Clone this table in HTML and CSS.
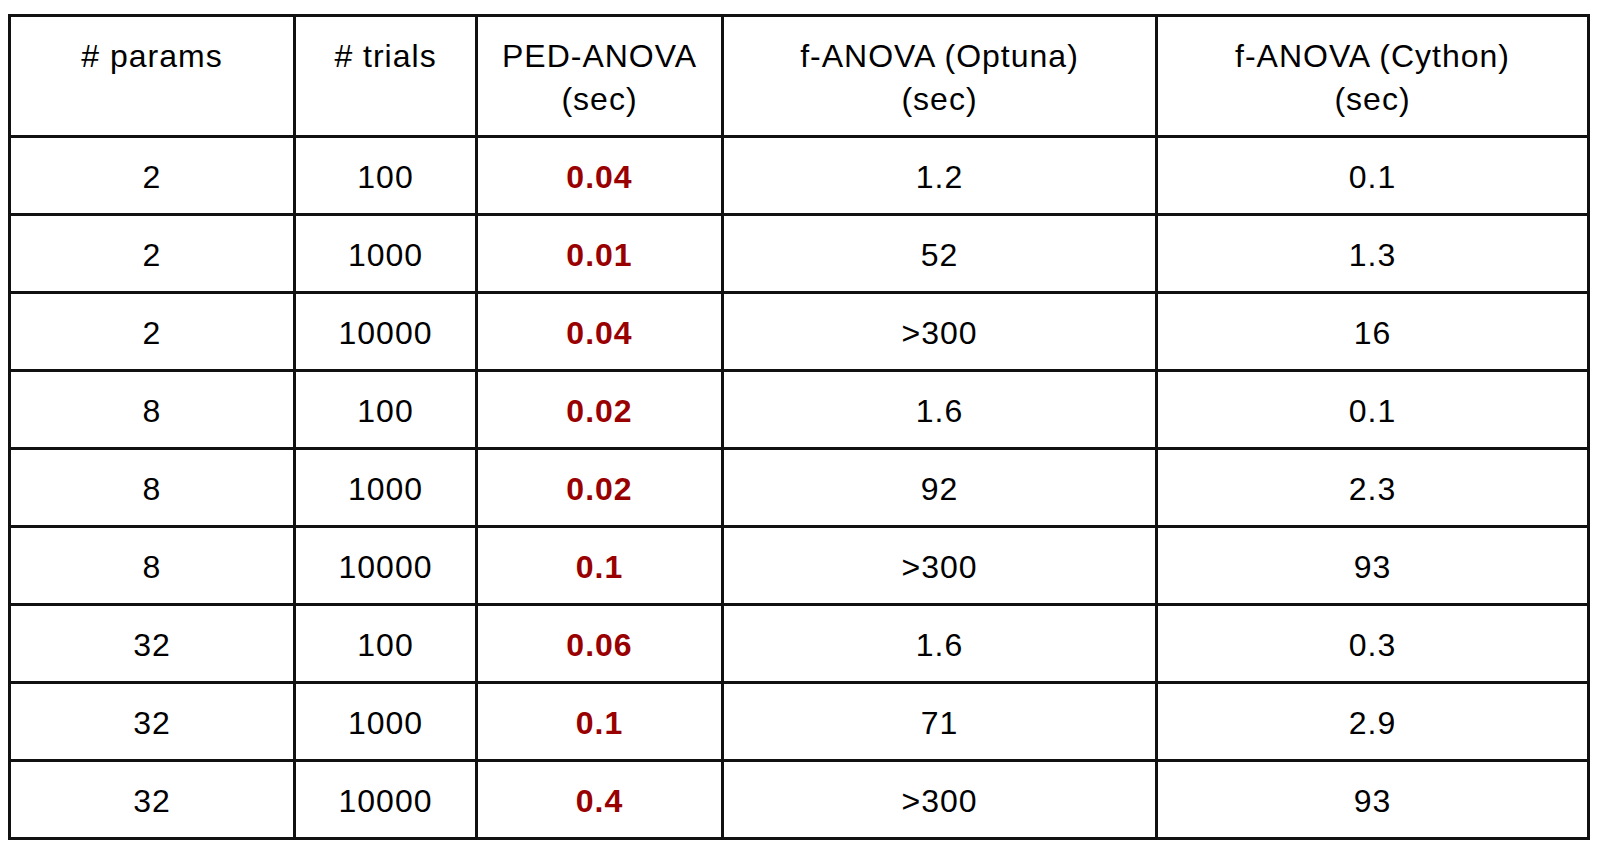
FILE: index.html
```html
<!DOCTYPE html>
<html lang="en">
<head>
<meta charset="utf-8">
<title>PED-ANOVA timing</title>
<link rel="stylesheet" href="styles.css">
</head>
<body>
<div class="page">
<table class="bench">
  <colgroup>
    <col class="c1"><col class="c2"><col class="c3"><col class="c4"><col class="c5">
  </colgroup>
  <thead>
    <tr class="head">
      <th># params</th>
      <th># trials</th>
      <th>PED-ANOVA<br>(sec)</th>
      <th>f-ANOVA (Optuna)<br>(sec)</th>
      <th>f-ANOVA (Cython)<br>(sec)</th>
    </tr>
  </thead>
  <tbody>
    <tr><td>2</td><td>100</td><td class="hl">0.04</td><td>1.2</td><td>0.1</td></tr>
    <tr><td>2</td><td>1000</td><td class="hl">0.01</td><td>52</td><td>1.3</td></tr>
    <tr><td>2</td><td>10000</td><td class="hl">0.04</td><td>&gt;300</td><td>16</td></tr>
    <tr><td>8</td><td>100</td><td class="hl">0.02</td><td>1.6</td><td>0.1</td></tr>
    <tr><td>8</td><td>1000</td><td class="hl">0.02</td><td>92</td><td>2.3</td></tr>
    <tr><td>8</td><td>10000</td><td class="hl">0.1</td><td>&gt;300</td><td>93</td></tr>
    <tr><td>32</td><td>100</td><td class="hl">0.06</td><td>1.6</td><td>0.3</td></tr>
    <tr><td>32</td><td>1000</td><td class="hl">0.1</td><td>71</td><td>2.9</td></tr>
    <tr><td>32</td><td>10000</td><td class="hl">0.4</td><td>&gt;300</td><td>93</td></tr>
  </tbody>
</table>
</div>
</body>
</html>
```

FILE: styles.css
```css
html, body {
  margin: 0;
  padding: 0;
  background: #ffffff;
}

.page {
  padding: 14px 0 0 8px;
}

.bench {
  border-collapse: collapse;
  table-layout: fixed;
  width: 1579px;
  font-family: "Liberation Sans", Arial, sans-serif;
  font-size: 32px;
  letter-spacing: 1px;
  color: #000;
}

.c1 { width: 285px; }
.c2 { width: 182px; }
.c3 { width: 246px; }
.c4 { width: 434px; }
.c5 { width: 432px; }

.bench th,
.bench td {
  border: 3px solid #111;
  text-align: center;
  padding: 0;
}

.bench th {
  font-weight: normal;
  vertical-align: top;
  line-height: 43px;
  padding-top: 18px;
}

.head {
  height: 121px;
}

.bench tbody tr {
  height: 78px;
}

.bench td {
  vertical-align: middle;
  line-height: 36px;
  padding-top: 2px;
}

.bench td.hl {
  color: #990000;
  font-weight: bold;
}
```
